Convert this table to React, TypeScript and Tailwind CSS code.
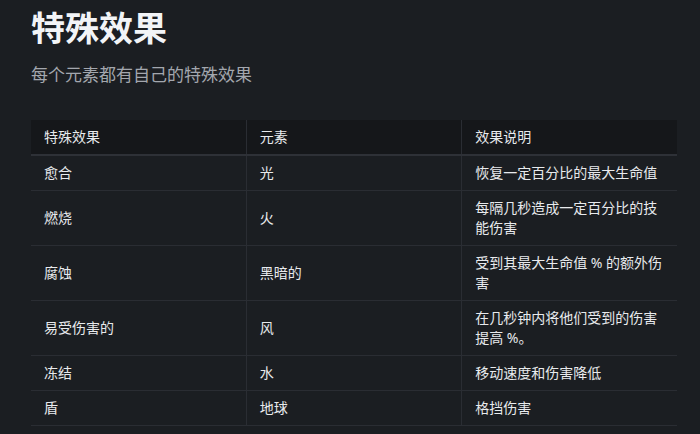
import React from 'react';

interface Efecto {
  nombre: string;
  elemento: string;
  descripcion: string;
}

const efectos: Efecto[] = [
  { nombre: '愈合', elemento: '光', descripcion: '恢复一定百分比的最大生命值' },
  { nombre: '燃烧', elemento: '火', descripcion: '每隔几秒造成一定百分比的技能伤害' },
  { nombre: '腐蚀', elemento: '黑暗的', descripcion: '受到其最大生命值 % 的额外伤害' },
  { nombre: '易受伤害的', elemento: '风', descripcion: '在几秒钟内将他们受到的伤害提高 %。' },
  { nombre: '冻结', elemento: '水', descripcion: '移动速度和伤害降低' },
  { nombre: '盾', elemento: '地球', descripcion: '格挡伤害' },
];

export default function App() {
  return (
    <div
      className="w-[700px] h-[434px] overflow-hidden bg-[#1b1e22] pl-[31px] pr-[23px] pt-[4px]"
      style={{ fontFamily: '"Noto Sans", "Noto Sans CJK SC", sans-serif' }}
    >
      <h1 className="text-[34px] leading-[48px] font-bold text-[#f2f4f7]">特殊效果</h1>
      <p className="mt-[11px] text-[17px] leading-[24px] text-[#a3a7ae]">每个元素都有自己的特殊效果</p>

      <table className="mt-[33px] w-full table-fixed border-collapse text-[14px] leading-[20px] text-[#e8eaed]">
        <thead>
          <tr className="bg-[#15171a] border-b-2 border-[#2e3137]">
            <th className="w-1/3 px-[13px] py-[7px] text-left font-normal border-r border-[#2a2d33]">特殊效果</th>
            <th className="w-1/3 px-[13px] py-[7px] text-left font-normal border-r border-[#2a2d33]">元素</th>
            <th className="w-1/3 px-[13px] py-[7px] text-left font-normal">效果说明</th>
          </tr>
        </thead>
        <tbody>
          {efectos.map((e) => (
            <tr key={e.nombre} className="border-b border-[#2a2d33]">
              <td className="px-[13px] py-[7px] border-r border-[#2a2d33]">{e.nombre}</td>
              <td className="px-[13px] py-[7px] border-r border-[#2a2d33]">{e.elemento}</td>
              <td className="px-[13px] py-[7px]">{e.descripcion}</td>
            </tr>
          ))}
        </tbody>
      </table>
    </div>
  );
}
